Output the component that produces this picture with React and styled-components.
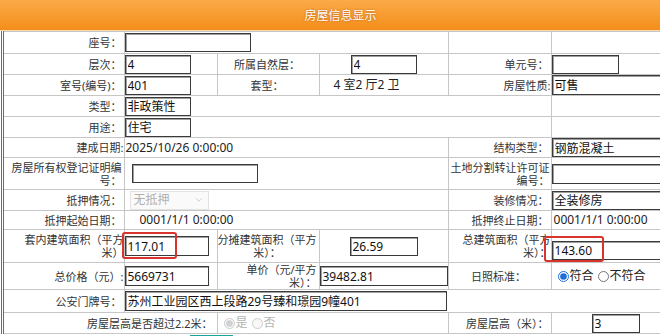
import styled, { createGlobalStyle } from "styled-components";
import { ChevronDown } from "lucide-react";

const GlobalStyle = createGlobalStyle`
  body {
    margin: 0;
    background: #fff;
    overflow: hidden;
    font-family: "Noto Sans", "Noto Sans CJK SC", sans-serif;
    color: #222;
  }
`;

const Page = styled.div`
  width: 681px;
`;

const Header = styled.div`
  height: 30px;
  border-bottom: 1px solid #fcd9a8;
  background: linear-gradient(#fbaa48, #f48e1a);
  color: #fff;
  font-size: 12px;
  display: flex;
  align-items: center;
  justify-content: center;
  text-shadow: 0 0 2px rgba(150, 60, 0, 0.7);
`;

const Frame = styled.div`
  margin-left: 1px;
  border-left: 3px double #6c6c6c;
`;

const Table = styled.table`
  width: 677px;
  table-layout: fixed;
  border-collapse: collapse;
  border-left: hidden;
`;

const Row = styled.tr`
  height: ${(p) => p.$h}px;
`;

const Cell = styled.td`
  border: 1px solid #c6c6c6;
  padding: 0 ${(p) => p.$pr ?? 0}px 0 ${(p) => p.$pl ?? 0}px;
  text-align: ${(p) => p.$align || "left"};
  vertical-align: middle;
  font-size: 12px;
  line-height: 14px;
  white-space: nowrap;
`;

const Label = styled(Cell)`
  font-size: 11px;
  line-height: 13px;
  color: #333;
  padding-right: ${(p) => p.$pr ?? 2}px;
`;

const Field = styled.input`
  box-sizing: border-box;
  width: ${(p) => p.$w}px;
  height: ${(p) => p.$h || 19}px;
  margin: ${(p) => p.$mt || 0}px 0 0 ${(p) => p.$ml || 0}px;
  border: 1px solid #3a3a3a;
  box-shadow: inset 1px 1px 0 #a0a0a0;
  padding: 0 2px;
  font: 12px "Noto Sans", "Noto Sans CJK SC", sans-serif;
  color: #111;
  background: #fff;
  vertical-align: top;
  outline: none;
`;

const Marked = styled.span`
  position: relative;
  display: inline-block;
  vertical-align: top;
`;

const RedBox = styled.span`
  position: absolute;
  left: ${(p) => p.$l}px;
  top: ${(p) => p.$t}px;
  width: ${(p) => p.$w}px;
  height: ${(p) => p.$h}px;
  box-sizing: border-box;
  border: 2px solid #d8332c;
  border-radius: 3px;
  pointer-events: none;
`;

const SelectBox = styled.span`
  display: inline-flex;
  align-items: center;
  justify-content: space-between;
  box-sizing: border-box;
  width: 79px;
  height: 19px;
  margin-left: 5px;
  padding: 0 4px 0 3px;
  border: 1px solid #e2e2e2;
  background: #fafafa;
  color: #b0b0b0;
  font-size: 12px;
  vertical-align: top;
`;

const Choices = styled.span`
  display: inline-flex;
  align-items: center;
  gap: 4px;
  font-size: 12px;
  vertical-align: top;
  color: ${(p) => (p.$off ? "#b4b4b4" : "#222")};
`;

const Choice = styled.label`
  display: inline-flex;
  align-items: center;
`;

const Radio = styled.input.attrs({ type: "radio" })`
  width: 11px;
  height: 11px;
  margin: 0 1px 0 0;
  accent-color: #1d6fd8;
`;

const ButtonBar = styled.div`
  padding-left: 190px;
`;

const Button = styled.button`
  width: 43px;
  height: 26px;
  border: none;
  background: #18a39b;
  color: #fff;
  font-size: 12px;
`;

const Val = ({ w, h, ml, mt, v }) => (
  <Field $w={w} $h={h} $ml={ml} $mt={mt} value={v} readOnly />
);

export default function App() {
  return (
    <Page>
      <GlobalStyle />
      <Header>房屋信息显示</Header>
      <Frame>
        <Table>
          <colgroup>
            <col style={{ width: 120 }} />
            <col style={{ width: 93 }} />
            <col style={{ width: 102 }} />
            <col style={{ width: 129 }} />
            <col style={{ width: 103 }} />
            <col style={{ width: 130 }} />
          </colgroup>
          <tbody>
            <Row $h={22}>
              <Label $align="right">座号：</Label>
              <Cell colSpan={3}><Val w={126} v="" /></Cell>
              <Cell />
              <Cell />
            </Row>
            <Row $h={21}>
              <Label $align="right">层次：</Label>
              <Cell><Val w={66} v="4" /></Cell>
              <Label $align="center">所属自然层：</Label>
              <Cell $align="center"><Val w={66} v="4" /></Cell>
              <Label $align="right">单元号：</Label>
              <Cell><Val w={67} v="" /></Cell>
            </Row>
            <Row $h={21}>
              <Label $align="right">室号(编号)：</Label>
              <Cell><Val w={66} v="401" /></Cell>
              <Label $align="center">套型：</Label>
              <Cell $pl={14}>4 室2 厅2 卫</Cell>
              <Label $align="right" $pr={0}>房屋性质:</Label>
              <Cell><Val w={130} h={20} v="可售" /></Cell>
            </Row>
            <Row $h={21}>
              <Label $align="right">类型：</Label>
              <Cell colSpan={4}><Val w={66} v="非政策性" /></Cell>
              <Cell />
            </Row>
            <Row $h={21}>
              <Label $align="right">用途：</Label>
              <Cell colSpan={4}><Val w={66} v="住宅" /></Cell>
              <Cell />
            </Row>
            <Row $h={20}>
              <Label $align="right" $pr={0}>建成日期:</Label>
              <Cell colSpan={3} $pl={1}>2025/10/26 0:00:00</Cell>
              <Label $align="right">结构类型：</Label>
              <Cell><Val w={130} h={19} v="钢筋混凝土" /></Cell>
            </Row>
            <Row $h={32}>
              <Label $align="right">
                房屋所有权登记证明编
                <br />
                号：
              </Label>
              <Cell colSpan={3}><Val w={126} ml={7} v="" /></Cell>
              <Label $align="right" $pr={1}>
                土地分割转让许可证
                <br />
                编号：
              </Label>
              <Cell><Val w={130} h={20} v="" /></Cell>
            </Row>
            <Row $h={21}>
              <Label $align="right">抵押情况：</Label>
              <Cell colSpan={3}>
                <SelectBox>
                  无抵押
                  <ChevronDown size={10} strokeWidth={1.5} />
                </SelectBox>
              </Cell>
              <Label $align="right">装修情况：</Label>
              <Cell><Val w={130} h={19} v="全装修房" /></Cell>
            </Row>
            <Row $h={19}>
              <Label $align="right">抵押起始日期：</Label>
              <Cell colSpan={3} $pl={15}>0001/1/1 0:00:00</Cell>
              <Label $align="right">抵押终止日期：</Label>
              <Cell $pl={2}>0001/1/1 0:00:00</Cell>
            </Row>
            <Row $h={33}>
              <Label $align="right" $pr={0}>
                套内建筑面积（平方
                <br />
                米）
              </Label>
              <Cell>
                <Marked>
                  <Val w={84} h={20} v="117.01" />
                  <RedBox $l={-3} $t={-4} $w={55} $h={27} />
                </Marked>
              </Cell>
              <Label $align="center">
                分摊建筑面积（平方
                <br />
                米）：
              </Label>
              <Cell $align="center"><Val w={68} v="26.59" /></Cell>
              <Label $align="right" $pr={0}>
                总建筑面积（平方
                <br />
                米）：
              </Label>
              <Cell>
                <Marked>
                  <Val w={130} h={19} mt={9} v="143.60" />
                  <RedBox $l={-8} $t={4} $w={60} $h={26} />
                </Marked>
              </Cell>
            </Row>
            <Row $h={27}>
              <Label $align="right" $pr={0}>总价格（元）:</Label>
              <Cell><Val w={84} h={20} v="5669731" /></Cell>
              <Label $align="right" $pr={2}>
                单价（元/平方
                <br />
                米）：
              </Label>
              <Cell><Val w={128} h={20} v="39482.81" /></Cell>
              <Label $align="center">日照标准：</Label>
              <Cell $pl={6}>
                <Choices>
                  <Choice><Radio name="sun" defaultChecked />符合</Choice>
                  <Choice><Radio name="sun" />不符合</Choice>
                </Choices>
              </Cell>
            </Row>
            <Row $h={23}>
              <Label $align="right">公安门牌号：</Label>
              <Cell colSpan={5}><Val w={322} h={20} v="苏州工业园区西上段路29号臻和璟园9幢401" /></Cell>
            </Row>
            <Row $h={21}>
              <Label colSpan={2} $align="right" $pr={4}>房屋层高是否超过2.2米：</Label>
              <Cell colSpan={2} $pl={6}>
                <Choices $off>
                  <Choice><Radio name="high" defaultChecked disabled />是</Choice>
                  <Choice><Radio name="high" disabled />否</Choice>
                </Choices>
              </Cell>
              <Label $align="right">房屋层高（米）：</Label>
              <Cell $pl={40}><Val w={48} v="3" /></Cell>
            </Row>
          </tbody>
        </Table>
      </Frame>
      <ButtonBar>
        <Button>保存</Button>
      </ButtonBar>
    </Page>
  );
}
